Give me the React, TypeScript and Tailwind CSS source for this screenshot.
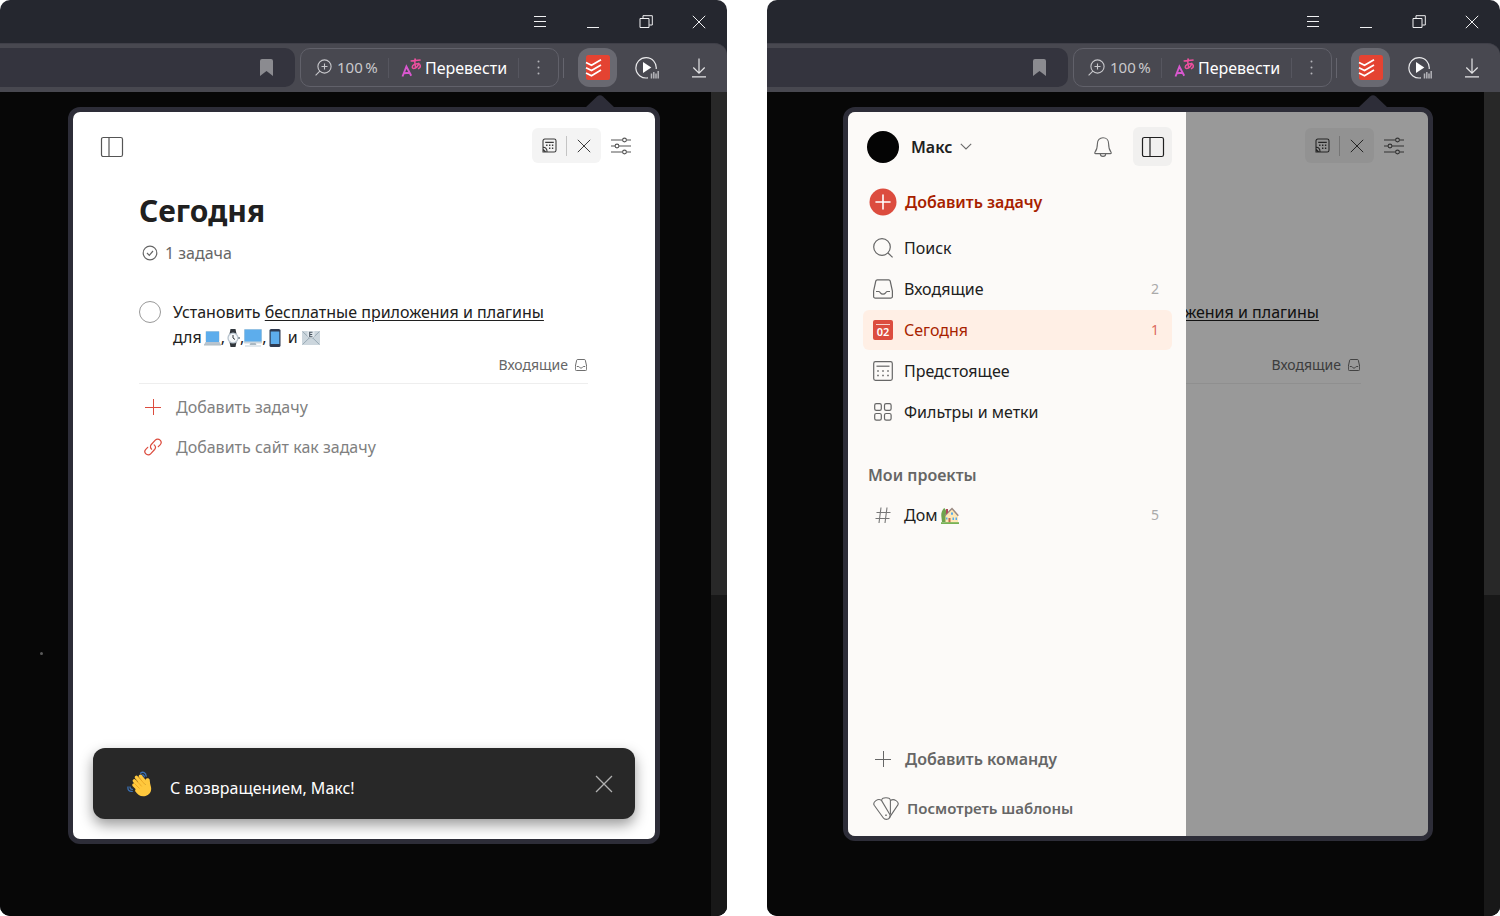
import type { ReactNode } from "react";

/* ---------- browser icons ---------- */

const MenuIcon = () => (
  <svg width="14" height="14" viewBox="0 0 14 14" fill="none" stroke="currentColor" strokeWidth="1">
    <path d="M1 1.5h12M1 6.5h12M1 11.5h12" />
  </svg>
);
const MinimizeIcon = () => (
  <svg width="14" height="14" viewBox="0 0 14 14" fill="none" stroke="currentColor" strokeWidth="1">
    <path d="M1 12.5h12" />
  </svg>
);
const RestoreIcon = () => (
  <svg width="14" height="14" viewBox="0 0 14 14" fill="none" stroke="currentColor" strokeWidth="1">
    <path d="M1 3.5h9v9h-9zM4 3.5V.7h9.3v9.3h-3" />
  </svg>
);
const CloseIcon = ({ size = 14 }: { size?: number }) => (
  <svg width={size} height={size} viewBox="0 0 14 14" fill="none" stroke="currentColor" strokeWidth="1">
    <path d="M.8.8l12.4 12.4M13.2.8L.8 13.2" />
  </svg>
);
const BookmarkIcon = () => (
  <svg width="13" height="17" viewBox="0 0 13 17" fill="currentColor">
    <path d="M2 0h9a2 2 0 0 1 2 2v15l-6.5-5L0 17V2a2 2 0 0 1 2-2z" />
  </svg>
);
const ZoomIcon = () => (
  <svg width="17" height="17" viewBox="0 0 17 17" fill="none" stroke="currentColor" strokeWidth="1.1">
    <circle cx="9.5" cy="7.5" r="6.6" />
    <path d="M4.8 12.2L.6 16.4M9.5 4.5v6M6.5 7.5h6" />
  </svg>
);
const TranslateIcon = () => (
  <svg width="21" height="20" viewBox="0 0 21 20" fill="none" strokeWidth="1.5">
    <path d="M1.500 18.500L5.400 8.500l4.800 9.300M2.900 15.300l5.800-.6" stroke="#d957cf" strokeWidth="1.900" />
    <path d="M9.600 3l10-1M14.200.3c-.6 3-.5 6.200.4 9M18 4.800c-.8 3-3 5.600-5.300 5.700-1.900 0-2-2.500.3-3.800 2.400-1.400 6-1.300 6.300 1 .2 1.600-.9 2.700-2.400 3.100" stroke="#ee4f9e" />
  </svg>
);
const DotsIcon = () => (
  <svg width="3" height="15" viewBox="0 0 3 15" fill="currentColor">
    <circle cx="1.5" cy="1.5" r="1" />
    <circle cx="1.5" cy="7.5" r="1" />
    <circle cx="1.5" cy="13.5" r="1" />
  </svg>
);
const TodoistIcon = () => (
  <svg width="25" height="25" viewBox="0 0 25 25" fill="none">
    <rect x="1" width="24" height="25" rx="2.500" fill="#e44332" />
    <path d="M1 7.500l5.500 2.800 9.500-5.600M1 12.700l5.500 2.800L16 9.900M1 17.900l5.500 2.800 9.500-5.600" stroke="#fff" strokeWidth="1.700" />
  </svg>
);
const PlayIcon = () => (
  <svg width="24" height="24" viewBox="0 0 24 24" fill="none" stroke="#e8e8ea" strokeWidth="1.2">
    <path d="M21.200 13A10.200 10.200 0 1 0 13 21.800" />
    <path d="M8 6v11l8.3-5.5z" fill="#fff" stroke="none" />
    <path d="M16.5 17.500V22.500M18.800 16V22.500M21 17.500V22.500M23.200 15V22.500" stroke="#b4b4b9" strokeWidth="1.5" />
  </svg>
);
const DownloadIcon = () => (
  <svg width="16" height="20" viewBox="0 0 16 20" fill="none" stroke="currentColor" strokeWidth="1.2">
    <path d="M8 .5V15M2.3 9.5L8 15.2l5.7-5.7M1 18.9h14" />
  </svg>
);

/* ---------- app icons ---------- */

const PanelIcon = () => (
  <svg width="24" height="22" viewBox="0 0 24 22" fill="none" stroke="currentColor" strokeWidth="1.2">
    <rect x="1.500" y="1.500" width="21" height="19" rx="1.800" />
    <path d="M9 1.500v19" />
  </svg>
);
const CalendarClockIcon = () => (
  <svg width="15" height="15" viewBox="0 0 15 15" fill="none" stroke="currentColor" strokeWidth="1.100">
    <path d="M1 9V2.800A1.800 1.800 0 0 1 2.800 1h9.400A1.800 1.800 0 0 1 14 2.800v9.400a1.800 1.800 0 0 1-1.800 1.800H5M3.200 4.400h8.600" />
    <path d="M4.100 7.300h1.400M7 7.300h1.400M9.900 7.300h1.400M7 10.300h1.400M9.900 10.300h1.400" strokeWidth="1.500" />
    <path d="M1 9.200c2.400-.2 4.300 2 4 4.800M1 9v5h4M1.200 11.500l2.500 2.500" />
  </svg>
);
const SlidersIcon = () => (
  <svg width="20" height="18" viewBox="0 0 20 18" fill="none" stroke="currentColor" strokeWidth="1.1">
    <path d="M0 3h11.500M15.500 3H20M0 9h4M8 9h12M0 15h11.500M15.500 15H20" />
    <circle cx="13.500" cy="3" r="1.900" />
    <circle cx="6" cy="9" r="1.900" />
    <circle cx="13.500" cy="15" r="1.900" />
  </svg>
);
const CheckCircleIcon = () => (
  <svg width="16" height="16" viewBox="0 0 16 16" fill="none" stroke="currentColor" strokeWidth="1.200">
    <circle cx="8" cy="8" r="6.800" />
    <path d="M5 8l2.300 2.300L11 6" />
  </svg>
);
const InboxIcon = ({ size }: { size: number }) => (
  <svg width={size} height={size} viewBox="0 0 20 20" fill="none" stroke="currentColor" strokeWidth={size < 16 ? 1.6 : 1.2}>
    <path d="M4.400.8h11.200a1.600 1.600 0 0 1 1.600 1.200L19.400 12v5.400a1.800 1.800 0 0 1-1.800 1.800H2.400A1.800 1.800 0 0 1 .6 17.400V12L2.800 2A1.600 1.600 0 0 1 4.400.8z" />
    <path d="M3 12.500h2.600c1 0 1.200.5 1.800 1.300.6.800 1.400 1.300 2.600 1.300s2-.5 2.600-1.300c.6-.8.8-1.300 1.800-1.300H17" />
  </svg>
);
const PlusIcon = ({ color = "currentColor" }: { color?: string }) => (
  <svg width="16" height="16" viewBox="0 0 16 16" fill="none" stroke={color} strokeWidth="1">
    <path d="M8.500 0v16M0 8.500h16" />
  </svg>
);
const LinkIcon = () => (
  <svg width="18" height="18" viewBox="0 0 18 18" fill="none" stroke="#dc4c3e" strokeWidth="1.200" strokeLinecap="round">
    <path d="M7.600 11.200a3.300 3.300 0 0 1-.3-4.700l4-4.300a3.300 3.300 0 0 1 4.800 0 3.300 3.300 0 0 1 0 4.600l-1.800 1.900" />
    <path d="M10.200 6.900a3.300 3.300 0 0 1 .4 4.600l-4 4.300a3.300 3.300 0 0 1-4.700.1 3.300 3.300 0 0 1-.1-4.600l1.900-2" />
  </svg>
);
const ChevronIcon = () => (
  <svg width="12" height="7" viewBox="0 0 12 7" fill="none" stroke="#6b6b6b" strokeWidth="1.100">
    <path d="M.8.800L6 6 11.200.800" />
  </svg>
);
const BellIcon = () => (
  <svg width="18" height="20" viewBox="0 0 18 20" fill="none" stroke="#666" strokeWidth="1.100" strokeLinejoin="round">
    <path d="M9 .8c-3.400 0-5.600 2.500-5.600 6 0 5-1.100 6.800-2.400 8.400-.5.700-.2 1.400.6 1.400h14.800c.8 0 1.100-.7.600-1.400-1.300-1.600-2.400-3.400-2.400-8.400 0-3.500-2.200-6-5.600-6z" />
    <path d="M6.300 16.700a2.700 2.700 0 0 0 5.400 0" />
  </svg>
);
const AddBadgeIcon = () => (
  <svg width="28" height="28" viewBox="0 0 28 28">
    <circle cx="14" cy="14" r="13.500" fill="#dc4c3e" />
    <path d="M14 7v14M7 14h14" stroke="#fff" strokeWidth="1.600" strokeLinecap="round" />
  </svg>
);
const SearchIcon = () => (
  <svg width="20" height="20" viewBox="0 0 20 20" fill="none" stroke="currentColor" strokeWidth="1.200">
    <circle cx="9" cy="9" r="8.300" />
    <path d="M15 15l4.600 4.400" />
  </svg>
);
const UpcomingIcon = () => (
  <svg width="20" height="20" viewBox="0 0 20 20" fill="none" stroke="currentColor" strokeWidth="1.200">
    <rect x=".700" y=".700" width="18.600" height="18.600" rx="1.800" />
    <path d="M3.500 5.200h13" />
    <path d="M4.200 10h1.600M9.200 10h1.600M14.200 10h1.600M4.200 14.500h1.600M9.200 14.500h1.600M14.200 14.500h1.600" strokeWidth="1.600" />
  </svg>
);
const FiltersIcon = () => (
  <svg width="20" height="20" viewBox="0 0 20 20" fill="none" stroke="currentColor" strokeWidth="1.200">
    <rect x="1.700" y="1.700" width="6.600" height="6.600" rx="1.600" />
    <rect x="11.500" y="1.700" width="6.600" height="6.600" rx="1.600" />
    <rect x="1.700" y="11.500" width="6.600" height="6.600" rx="1.600" />
    <rect x="11.500" y="11.500" width="6.600" height="6.600" rx="1.600" />
  </svg>
);
const HashIcon = () => (
  <svg width="20" height="20" viewBox="0 0 20 20" fill="none" stroke="#777" strokeWidth="1.100">
    <path d="M3.500 7.500h14M2.500 13.500h14M8 2.500L6 18M14 2.500L12 18" />
  </svg>
);
const TemplatesIcon = () => (
  <svg width="26" height="23" viewBox="0 0 26 23" fill="none" stroke="#6b6b6b" strokeWidth="1.100" strokeLinejoin="round">
    <path d="M8.600 3.600c0-1.800 2-2.900 4.400-2.900s4.400 1.100 4.400 2.900V17.500" />
    <path d="M8.600 3.600L16.700 17.300c1.200 2.200-.2 4.900-2.500 5-1.700.3-3.200-.4-4-1.600L1.200 8.300C-.6 5.200 5.100.600 8.600 3.600z" />
    <path d="M17.400 3.600c3.500-2.600 9 1.200 7.500 4.300l-8.700 13" />
    <path d="M13 17.500v1.600" strokeWidth="1.500" />
  </svg>
);
const TodayIcon = () => (
  <span className="flex size-5 flex-col items-center rounded-[2px] bg-[#dc4c3e] pt-1 text-white">
    <span className="h-px w-3.5 bg-[#f6d0cb]" />
    <span className="text-[11px] leading-[14px] font-semibold">02</span>
  </span>
);

/* ---------- emoji drawings ---------- */

const Laptop = () => (
  <svg width="17" height="17" viewBox="0 0 17 17" className="shrink-0">
    <rect x="1.500" y="2" width="14" height="11" rx="1" fill="#ccd6dd" />
    <rect x="2" y="2.500" width="13" height="10.500" fill="#5dadec" />
    <path d="M1.500 13h14l1.300 2.600H.2z" fill="#b8c4cf" />
    <path d="M0 15.400h17v1H0z" fill="#9aaab4" />
  </svg>
);
const Watch = () => (
  <svg width="13" height="18" viewBox="0 0 13 18" className="shrink-0">
    <path d="M3.500 0h5l1 5h-7zM3.500 18h5l1-5h-7z" fill="#31373d" />
    <circle cx="6" cy="9" r="5.600" fill="#b8c4cf" />
    <circle cx="6" cy="9" r="4.300" fill="#f5f8fa" />
    <path d="M6 6v3l2 1.500" stroke="#31373d" strokeWidth="1" fill="none" />
    <rect x="11.400" y="8" width="1.300" height="2" fill="#66757f" />
  </svg>
);
const Desktop = () => (
  <svg width="18" height="18" viewBox="0 0 18 18" className="shrink-0">
    <rect width="18" height="14.500" rx="1" fill="#ccd6dd" />
    <rect x=".500" y=".500" width="17" height="12" fill="#5dadec" />
    <path d="M6.500 14h5l1 2h-7z" fill="#aab8c2" />
    <rect x="1" y="16" width="16" height="2" fill="#e1e8ed" />
  </svg>
);
const Phone = () => (
  <svg width="12" height="18" viewBox="0 0 12 18" className="shrink-0">
    <rect x=".500" width="11" height="18" rx="1.600" fill="#2f3b52" />
    <rect x="1.700" y="2.500" width="8.600" height="12.500" fill="#5dadec" />
  </svg>
);
const Email = () => (
  <svg width="18" height="14" viewBox="0 0 18 14" className="shrink-0">
    <rect width="18" height="14" rx="1" fill="#ccd6dd" />
    <path d="M.5 13.500L7 7.200M17.500 13.500L11 7.200M.500.500l6.800 6.500q1.700 1.400 3.400 0L17.500.500" stroke="#99aab5" fill="none" />
    <path d="M5.500 0h7v5.500L9 8 5.500 5.500z" fill="#e1e8ed" />
    <path d="M10.500 1.200H7.700v4.600h2.800M7.700 3.500h2.500" stroke="#4a5560" strokeWidth="1.100" fill="none" />
  </svg>
);
const WavingHand = () => (
  <svg width="25" height="26" viewBox="0 0 25 26">
    <g fill="none" stroke="#3b70b3" strokeWidth="1.300" strokeLinecap="round">
      <path d="M13.500 2.200c2.500-2 5.500-.5 5.700 3M14.500 4.200c1.500-.8 2.600 0 2.800 1.600" />
      <path d="M1 16c-.5 3 1.500 5 4.300 4.300M3 16c0 1.500.8 2.400 2.400 2.400" />
    </g>
    <path d="M7.300 9.800L12.800 16M9.400 6.300L16 13.500M13.300 5.200L18.600 11.500M6.900 14L12 19" stroke="#ffc83d" strokeWidth="3.400" strokeLinecap="round" />
    <path d="M18.500 13.500V9c0-2.200 3.800-2.600 4.200-.2.300 2 .2 3.400.9 5.600 1.900 5.800-1.100 9.600-5 10.500-4.600 1-7.600-.8-10.600-5L11 10z" fill="#ffc83d" />
    <path d="M9.200 9.300l5.200 5.800M12.500 7.200l5 5.800M7.800 12.800l4.500 4.500" stroke="#e59c1b" strokeWidth=".700" fill="none" strokeLinecap="round" />
  </svg>
);
const House = () => (
  <svg width="18" height="17" viewBox="0 0 18 17">
    <path d="M3.200 1C5.500 3 6 6 5.500 9.500L5 15H1L.3 9C0 6 1 3 3.200 1z" fill="#6fa34e" />
    <path d="M4.500 8.500L11 2l6 6.500V16H4.500z" fill="#ffe8b6" />
    <path d="M3.800 8.800L11 1.500l6.300 7.300" stroke="#9a8a83" strokeWidth="1.500" fill="none" />
    <path d="M5 2h2v3.500L5 7.300z" fill="#b0475a" />
    <path d="M7.500 11h2v4.500h-2z" fill="#c1694f" />
    <path d="M10 5.500h2v2.300h-2zM5 10.500h1.500v2H5zM11.500 10.500h1.500v2.500h-1.500zM14.500 10.500H16V13h-1.500z" fill="#55acee" />
    <path d="M0 15.200h18V17H0z" fill="#77b255" />
  </svg>
);

/* ---------- browser window ---------- */

function TitleBar() {
  const buttons: [string, ReactNode][] = [
    ["Меню", <MenuIcon />],
    ["Свернуть", <MinimizeIcon />],
    ["Восстановить", <RestoreIcon />],
    ["Закрыть", <CloseIcon />],
  ];
  return (
    <div className="flex h-11 items-center justify-end gap-[39px] pr-[21px] text-[#f0f0f2]">
      {buttons.map(([label, icon]) => (
        <button key={label} aria-label={label}>
          {icon}
        </button>
      ))}
    </div>
  );
}

function Toolbar() {
  return (
    <div className="-mt-px flex h-[49px] items-center rounded-tr-xl border-t border-[#3f3f48] bg-[#484850] pr-5 pb-px text-[#e4e4e6]">
      <div className="flex h-[39px] min-w-0 flex-1 items-center justify-end rounded-r-[10px] bg-[#34343e] pr-[22px] text-[#8b8b90]">
        <button aria-label="Закладка">
          <BookmarkIcon />
        </button>
      </div>
      <div className="ml-[5px] flex h-[39px] w-[259px] items-center rounded-[10px] border border-[#61616a] pl-3.5">
        <button className="flex items-center gap-[5px] text-[#c8c8cc]">
          <ZoomIcon />
          <span className="w-[47px] text-left text-[15px] whitespace-nowrap">100{"\u202f"}%</span>
        </button>
        <span className="mr-3 ml-1 h-5 w-px bg-[#56565f]" />
        <button className="flex items-center gap-[3px] text-white">
          <TranslateIcon />
          <span className="w-[81px] text-left text-base whitespace-nowrap">Перевести</span>
        </button>
        <span className="mr-[18px] ml-3 h-5 w-px bg-[#56565f]" />
        <button aria-label="Ещё" className="text-[#b4b4b8]">
          <DotsIcon />
        </button>
      </div>
      <span className="mr-3.5 ml-1 h-5 w-px bg-[#65656e]" />
      <button aria-label="Todoist" className="flex size-[39px] items-center justify-center rounded-xl bg-[#696971]">
        <TodoistIcon />
      </button>
      <button aria-label="Видео" className="ml-[18px]">
        <PlayIcon />
      </button>
      <button aria-label="Загрузки" className="ml-8">
        <DownloadIcon />
      </button>
    </div>
  );
}

function BrowserWindow({ bodyClass, backdrop, children }: { bodyClass: string; backdrop?: ReactNode; children: ReactNode }) {
  return (
    <section className="flex min-w-0 flex-col overflow-hidden rounded-[10px] bg-[#25272f]">
      <TitleBar />
      <Toolbar />
      <div className="flex flex-1 bg-[#070707]">
        <div className={`relative flex min-w-0 flex-1 pt-[15px] pr-[51px] ${bodyClass}`}>
          {backdrop}
          <div className="relative flex flex-1 rounded-xl border-5 border-[#2d2d38]">
            <svg width="30" height="13" viewBox="0 0 30 13" className="absolute -top-[17px] right-10" fill="#2d2d38">
              <path d="M0 13L12 1.500q3-2.500 6 0L30 13z" />
            </svg>
            <div className="relative flex flex-1 flex-col overflow-hidden rounded-[7px] bg-white">{children}</div>
          </div>
        </div>
        <div className="w-4 bg-[#181818]">
          <div className="h-[503px] bg-[#282828]" />
        </div>
      </div>
    </section>
  );
}

/* ---------- Todoist views ---------- */

function TodayView() {
  return (
    <>
      <header className="flex items-center justify-between pt-4 pr-6 pl-[27px] text-[#555]">
        <button aria-label="Боковая панель" className="pt-0.5">
          <PanelIcon />
        </button>
        <div className="flex items-center gap-2.5">
          <div className="flex h-[35px] items-center rounded-md bg-[#f4f4f4] px-2.5 text-[#3c3c3c]">
            <button aria-label="Календарь">
              <CalendarClockIcon />
            </button>
            <span className="mr-2.5 ml-[9px] h-5 w-px bg-[#c4c4c4]" />
            <button aria-label="Закрыть календарь">
              <CloseIcon />
            </button>
          </div>
          <button aria-label="Настройки вида">
            <SlidersIcon />
          </button>
        </div>
      </header>
      <main className="pt-7 pr-[67px] pl-[66px]">
        <h1 className="text-[30px] leading-10 font-bold text-[#202020]">Сегодня</h1>
        <p className="mt-2.5 flex items-center gap-[7px] pl-[3px] text-base leading-6 text-[#666]">
          <CheckCircleIcon />1 задача
        </p>
        <div className="mt-[35px] flex items-start gap-3 text-[#202020]">
          <input
            type="checkbox"
            aria-label="Выполнить задачу"
            className="mt-px size-[22px] shrink-0 appearance-none rounded-full border border-[#999]"
          />
          <p className="text-base leading-[25px] whitespace-nowrap">
            Установить{" "}
            <a href="#apps" className="underline decoration-1 underline-offset-2">
              бесплатные приложения и плагины
            </a>
            <br />
            <span className="flex h-[25px] items-center">
              <span className="mr-0.5">для</span>
              <Laptop />
              <span className="mr-0.5">,</span>
              <Watch />
              <span>,</span>
              <Desktop />
              <span className="mr-0.5">,</span>
              <Phone />
              <span className="mr-1 ml-[7px]">и</span>
              <Email />
            </span>
          </p>
        </div>
        <p className="flex items-center justify-end gap-[7px] border-b border-[#eee] pt-1 pr-px pb-[7px] text-sm leading-[22px] text-[#666]">
          Входящие
          <InboxIcon size={12} />
        </p>
        <div className="flex flex-col items-start pt-[3px] text-base text-[#808080]">
          <button className="flex h-10 items-center">
            <span className="flex w-[37px] pl-1.5">
              <PlusIcon color="#dc4c3e" />
            </span>
            Добавить задачу
          </button>
          <button className="flex h-10 items-center">
            <span className="flex w-[37px] pl-[5px]">
              <LinkIcon />
            </span>
            Добавить сайт как задачу
          </button>
        </div>
      </main>
    </>
  );
}

function Toast() {
  return (
    <div
      role="status"
      className="absolute inset-x-5 bottom-5 flex h-[71px] items-center rounded-xl bg-[#282828] pr-[22px] pl-[34px] text-base text-white shadow-[0_6px_14px_rgba(0,0,0,0.4)]"
    >
      <WavingHand />
      <span className="flex-1 pt-2 pl-[18px]">С возвращением, Макс!</span>
      <button aria-label="Закрыть уведомление" className="text-[#b0b0b0]">
        <CloseIcon size={18} />
      </button>
    </div>
  );
}

type NavItem = { label: string; icon: ReactNode; count?: number; active?: boolean };

const navItems: NavItem[] = [
  { label: "Поиск", icon: <SearchIcon /> },
  { label: "Входящие", icon: <InboxIcon size={20} />, count: 2 },
  { label: "Сегодня", icon: <TodayIcon />, count: 1, active: true },
  { label: "Предстоящее", icon: <UpcomingIcon /> },
  { label: "Фильтры и метки", icon: <FiltersIcon /> },
];

function NavRow({ label, icon, count, active, children }: NavItem & { children?: ReactNode }) {
  return (
    <a
      href="#view"
      className={`flex h-10 items-center rounded-md pr-[13px] pl-2.5 ${active ? "bg-[#ffefe5] text-[#a81f00]" : "text-[#202020]"}`}
    >
      <span className={`mr-[11px] ${active ? "" : "text-[#666]"}`}>{icon}</span>
      <span className="flex flex-1 items-center gap-1">
        {label}
        {children}
      </span>
      {count !== undefined && <span className={`text-sm ${active ? "text-[#dc6a5e]" : "text-[#aaa]"}`}>{count}</span>}
    </a>
  );
}

function Sidebar() {
  return (
    <aside className="absolute inset-y-0 left-0 flex w-[338px] flex-col bg-[#fcfaf8] px-3.5 pt-[15px] pb-2 pl-[15px] text-base">
      <div className="flex items-center pl-1">
        <button className="flex items-center font-semibold text-[#202020]">
          <span className="size-8 rounded-full bg-[#040404]" />
          <span className="mr-2 ml-3">Макс</span>
          <ChevronIcon />
        </button>
        <button aria-label="Уведомления" className="mr-[21px] ml-auto">
          <BellIcon />
        </button>
        <button aria-label="Скрыть панель" className="flex size-[39px] items-center justify-center rounded-md bg-[#f1f0ef] text-[#202020]">
          <PanelIcon />
        </button>
      </div>
      <button className="mt-4 flex h-10 items-center gap-2 pl-1.5 font-semibold text-[#a81f00]">
        <AddBadgeIcon />
        Добавить задачу
      </button>
      <nav className="mt-1.5 flex flex-col gap-px">
        {navItems.map((item) => (
          <NavRow key={item.label} {...item} />
        ))}
      </nav>
      <h2 className="mt-[23px] flex h-10 items-center pl-[5px] font-semibold text-[#666]">Мои проекты</h2>
      <NavRow label="Дом" icon={<HashIcon />} count={5}>
        <House />
      </NavRow>
      <div className="mt-auto flex flex-col gap-[9px] font-semibold text-[#666]">
        <button className="flex h-10 items-center gap-[14px] pl-3">
          <PlusIcon />
          Добавить команду
        </button>
        <button className="flex h-10 items-center gap-2 pl-2.5 text-[15px]">
          <TemplatesIcon />
          Посмотреть шаблоны
        </button>
      </div>
    </aside>
  );
}

export default function App() {
  return (
    <div className="grid min-h-screen grid-cols-[727fr_733fr] gap-10 bg-white font-['Noto_Sans','Noto_Sans_CJK_JP',sans-serif]">
      <BrowserWindow
        bodyClass="pb-[72px] pl-[68px]"
        backdrop={<span className="absolute top-[560px] left-10 size-[3px] rounded-full bg-[#5a5a5a]" />}
      >
        <TodayView />
        <Toast />
      </BrowserWindow>
      <BrowserWindow bodyClass="pb-[75px] pl-[76px]">
        <TodayView />
        <div className="absolute inset-0 bg-black/40" />
        <Sidebar />
      </BrowserWindow>
    </div>
  );
}
